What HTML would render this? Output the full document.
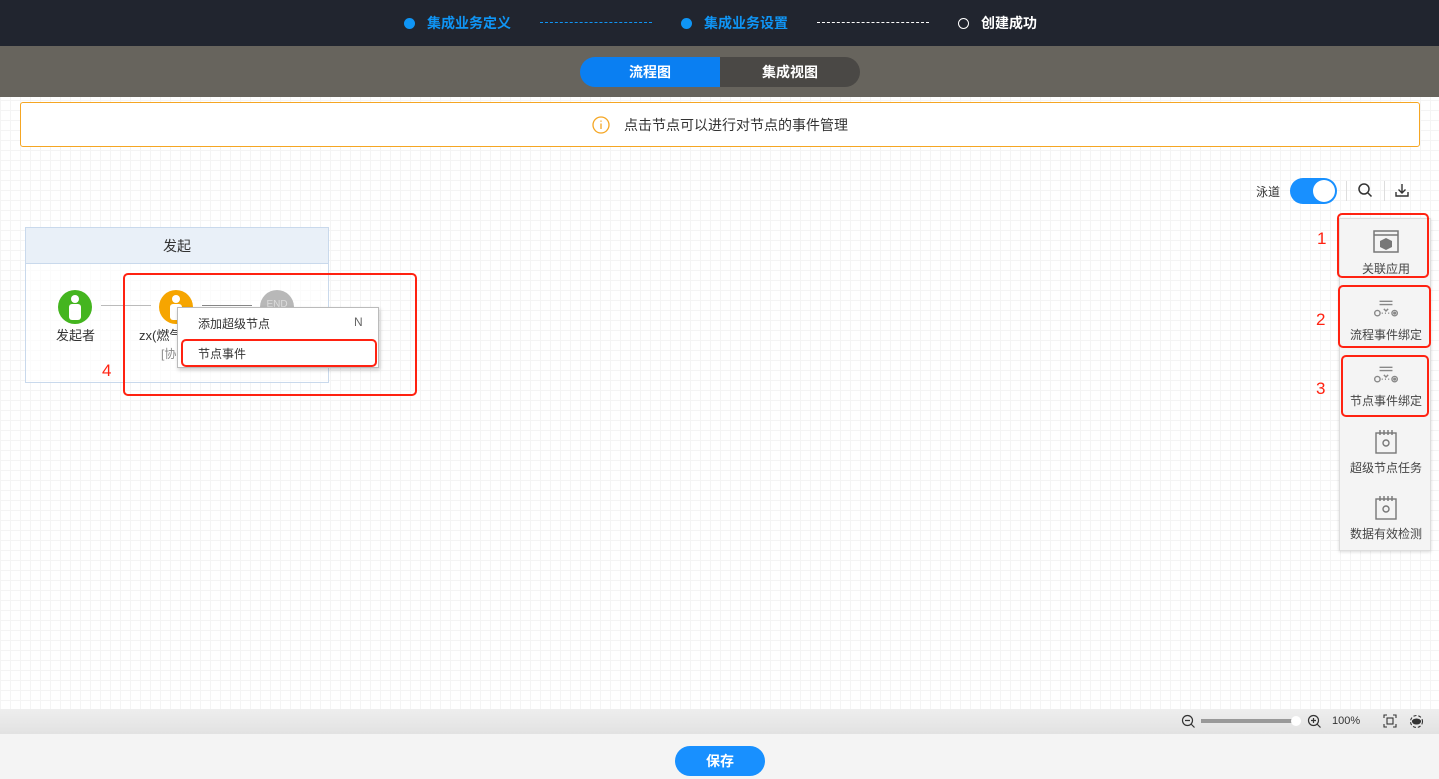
<!DOCTYPE html>
<html><head><meta charset="utf-8"><style>
*{margin:0;padding:0;box-sizing:border-box}
body{width:1439px;height:779px;overflow:hidden;position:relative;font-family:"Liberation Sans","Noto Sans CJK SC",sans-serif;font-size:12px;color:#333;
background-color:#fff;background-image:linear-gradient(#f4f4f4 1px,transparent 1px),linear-gradient(90deg,#f4f4f4 1px,transparent 1px);background-size:10px 10px}
.abs{position:absolute}
.hdr{left:0;top:0;width:1439px;height:46px;background:#21252f}
.step{top:13px;font-size:14px;font-weight:bold;color:#0f95f5;display:flex;align-items:center}
.dot{width:11px;height:11px;border-radius:50%;background:#0f95f5;margin-right:12px}
.band{left:0;top:46px;width:1439px;height:51px;background:#67645d}
.pill{top:57px;height:30px;font-size:14px;font-weight:bold;color:#fff;text-align:center;line-height:30px}
.notice{left:20px;top:102px;width:1400px;height:45px;background:#fff;border:1px solid #f5a623;border-radius:3px;display:flex;align-items:center;justify-content:center;font-size:14px;color:#333}
.red{border:2px solid #f21;border-radius:5px}
.panel{left:1339px;top:218px;width:92px;height:333px;background:#f4f4f4;border:1px solid #ddd;box-shadow:0 1px 3px rgba(0,0,0,.15)}
.pi{position:absolute;left:0;width:92px;text-align:center;font-size:12px;color:#444}
.pi svg{display:block;margin:0 auto}
.num{color:#f21;font-size:17px}
</style></head><body>
<div class="abs hdr"></div>
<div class="abs step" style="left:404px"><span class="dot"></span>集成业务定义</div>
<div class="abs" style="left:540px;top:22px;width:112px;border-top:1px dashed #0f95f5"></div>
<div class="abs step" style="left:681px"><span class="dot"></span>集成业务设置</div>
<div class="abs" style="left:817px;top:22px;width:112px;border-top:1px dashed #fff"></div>
<div class="abs step" style="left:958px;color:#fff"><span class="dot" style="background:none;border:1.5px solid #fff"></span>创建成功</div>
<div class="abs band"></div>
<div class="abs pill" style="left:580px;width:140px;background:#0a7ff2;border-radius:15px 0 0 15px">流程图</div>
<div class="abs pill" style="left:720px;width:140px;background:#4a4845;border-radius:0 15px 15px 0">集成视图</div>
<div class="abs notice"><svg width="18" height="18" viewBox="0 0 18 18" style="margin-right:14px" fill="none" stroke="#f5a623" stroke-width="1.3"><circle cx="9" cy="9" r="8"/><path d="M9 7.5v5.5M9 4.5v1.3"/></svg>点击节点可以进行对节点的事件管理</div>

<!-- toolbar -->
<div class="abs" style="left:1256px;top:183px;font-size:12px">泳道</div>
<div class="abs" style="left:1290px;top:178px;width:47px;height:26px;border-radius:13px;background:#1890ff"><div style="position:absolute;right:2px;top:2px;width:22px;height:22px;border-radius:50%;background:#fff"></div></div>
<div class="abs" style="left:1346px;top:181px;height:20px;border-left:1px solid #ddd"></div>
<svg class="abs" style="left:1357px;top:182px" width="16" height="16" viewBox="0 0 16 16" fill="none" stroke="#333" stroke-width="1.5"><circle cx="7" cy="7" r="5"/><path d="M11 11l3.5 3.5"/></svg>
<div class="abs" style="left:1384px;top:181px;height:20px;border-left:1px solid #ddd"></div>
<svg class="abs" style="left:1394px;top:182px" width="16" height="16" viewBox="0 0 16 16" fill="none" stroke="#333" stroke-width="1.4"><path d="M8 2v9M4.5 7.5L8 11l3.5-3.5M2 10v4h12v-4"/></svg>

<!-- lane -->
<div class="abs" style="left:25px;top:227px;width:304px;height:156px;border:1px solid #c9d9ec;background:rgba(255,255,255,.6)"></div>
<div class="abs" style="left:25px;top:227px;width:304px;height:37px;background:#e9f0f8;border:1px solid #c9d9ec;text-align:center;line-height:36px;font-size:14px">发起</div>
<div class="abs" style="left:101px;top:305px;width:50px;border-top:1px solid #bbb"></div>
<div class="abs" style="left:58px;top:290px;width:34px;height:34px;border-radius:50%;background:#44b51f"></div>
<div class="abs" style="left:71px;top:295px;width:8px;height:8px;border-radius:50%;background:#fff"></div>
<div class="abs" style="left:69px;top:304px;width:12px;height:16px;border-radius:3px;background:#fff"></div>
<div class="abs" style="left:56px;top:325px;font-size:13px">发起者</div>
<div class="abs" style="left:159px;top:290px;width:34px;height:34px;border-radius:50%;background:#f6a500"></div>
<div class="abs" style="left:172px;top:295px;width:8px;height:8px;border-radius:50%;background:#fff"></div>
<div class="abs" style="left:170px;top:304px;width:12px;height:16px;border-radius:3px;background:#fff"></div>
<div class="abs" style="left:260px;top:290px;width:34px;height:34px;border-radius:50%;background:#b8b8b8;color:#ddd;font-size:10px;text-align:center;line-height:30px">END</div>
<div class="abs" style="left:202px;top:305px;width:50px;border-top:1px solid #888"></div>
<div class="abs" style="left:139px;top:325px;font-size:13px">zx(燃气</div>
<div class="abs" style="left:161px;top:345px;font-size:12px;color:#888">[协</div>
<div class="abs red" style="left:123px;top:273px;width:294px;height:123px"></div>
<div class="abs num" style="left:102px;top:361px">4</div>
<div class="abs" style="left:177px;top:307px;width:202px;height:61px;background:#fff;border:1px solid #bbb;box-shadow:1px 2px 4px rgba(0,0,0,.2)"></div>
<div class="abs" style="left:198px;top:315px;font-size:12px">添加超级节点</div>
<div class="abs" style="left:354px;top:315px;font-size:12px;color:#666">N</div>
<div class="abs red" style="left:181px;top:339px;width:196px;height:28px"></div>
<div class="abs" style="left:198px;top:345px;font-size:12px">节点事件</div>

<!-- panel -->
<div class="abs panel">
 <div class="pi" style="top:11px"><svg width="26" height="24" viewBox="0 0 26 24"><rect x="1" y="1" width="24" height="21" fill="none" stroke="#777" stroke-width="1.5"/><path d="M1 5h24" stroke="#777" stroke-width="1.5"/><path d="M13 8l6 3v6l-6 3-6-3v-6z" fill="#777"/></svg><div style="margin-top:6px">关联应用</div></div>
 <div class="pi" style="top:80px"><svg width="28" height="24" viewBox="0 0 26 22" fill="none" stroke="#888" stroke-width="1.3"><path d="M7 2h12M7 5h12M11 9l2 2 2-2"/><circle cx="5" cy="13" r="2.5"/><circle cx="21" cy="13" r="2.5"/><circle cx="21" cy="13" r=".8" fill="#888"/><path d="M9 13h1M12 13h1M15 13h1"/></svg><div style="margin-top:3px">流程事件绑定</div></div>
 <div class="pi" style="top:146px"><svg width="28" height="24" viewBox="0 0 26 22" fill="none" stroke="#888" stroke-width="1.3"><path d="M7 2h12M7 5h12M11 9l2 2 2-2"/><circle cx="5" cy="13" r="2.5"/><circle cx="21" cy="13" r="2.5"/><circle cx="21" cy="13" r=".8" fill="#888"/><path d="M9 13h1M12 13h1M15 13h1"/></svg><div style="margin-top:3px">节点事件绑定</div></div>
 <div class="pi" style="top:210px"><svg width="24" height="26" viewBox="0 0 24 26" fill="none" stroke="#777" stroke-width="1.4"><rect x="2" y="4" width="20" height="20"/><path d="M6 1v5M10 1v5M14 1v5M18 1v5"/><circle cx="12" cy="14" r="3"/></svg><div style="margin-top:4px">超级节点任务</div></div>
 <div class="pi" style="top:276px"><svg width="24" height="26" viewBox="0 0 24 26" fill="none" stroke="#777" stroke-width="1.4"><rect x="2" y="4" width="20" height="20"/><path d="M6 1v5M10 1v5M14 1v5M18 1v5"/><circle cx="12" cy="14" r="3"/></svg><div style="margin-top:4px">数据有效检测</div></div>
</div>
<div class="abs red" style="left:1337px;top:213px;width:92px;height:65px"></div>
<div class="abs red" style="left:1338px;top:285px;width:93px;height:63px"></div>
<div class="abs red" style="left:1341px;top:355px;width:88px;height:62px"></div>
<div class="abs num" style="left:1317px;top:229px">1</div>
<div class="abs num" style="left:1316px;top:310px">2</div>
<div class="abs num" style="left:1316px;top:379px">3</div>

<!-- bottom -->
<div class="abs" style="left:0;top:709px;width:1439px;height:25px;background:linear-gradient(#eeeeee,#e2e2e2)"></div>
<svg class="abs" style="left:1181px;top:714px" width="15" height="15" viewBox="0 0 15 15" fill="none" stroke="#333" stroke-width="1.2"><circle cx="6.5" cy="6.5" r="5"/><path d="M4 6.5h5M10 10l3.5 3.5"/></svg>
<div class="abs" style="left:1201px;top:719px;width:93px;height:4px;background:#999"></div>
<div class="abs" style="left:1291px;top:716px;width:10px;height:10px;border-radius:50%;background:#fff"></div>
<svg class="abs" style="left:1307px;top:714px" width="15" height="15" viewBox="0 0 15 15" fill="none" stroke="#333" stroke-width="1.2"><circle cx="6.5" cy="6.5" r="5"/><path d="M4 6.5h5M6.5 4v5M10 10l3.5 3.5"/></svg>
<div class="abs" style="left:1332px;top:715px;font-size:11px">100%</div>
<svg class="abs" style="left:1383px;top:714px" width="14" height="14" viewBox="0 0 14 14" fill="none" stroke="#333" stroke-width="1.1"><rect x="4" y="4" width="6" height="6"/><path d="M1 4V1h3M10 1h3v3M13 10v3h-3M4 13H1v-3"/></svg>
<svg class="abs" style="left:1409px;top:714px" width="15" height="15" viewBox="0 0 15 15" fill="none" stroke="#333" stroke-width="1.1"><circle cx="7.5" cy="7.5" r="6" stroke-dasharray="3 2"/><ellipse cx="7.5" cy="7.5" rx="4" ry="2.5" fill="#333"/></svg>
<div class="abs" style="left:0;top:734px;width:1439px;height:45px;background:#f4f4f4"></div>
<div class="abs" style="left:675px;top:746px;width:90px;height:30px;border-radius:15px;background:#1890ff;color:#fff;font-size:14px;font-weight:bold;text-align:center;line-height:30px">保存</div>
</body></html>
